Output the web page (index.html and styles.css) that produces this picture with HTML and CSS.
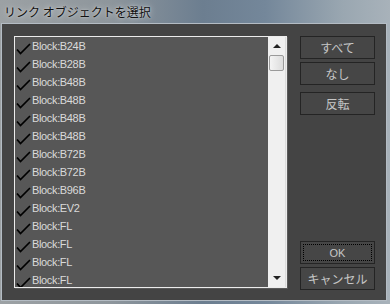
FILE: index.html
```html
<!DOCTYPE html>
<html lang="ja">
<head>
    <meta charset="UTF-8">
    <title>リンク オブジェクトを選択</title>
    <link rel="stylesheet" href="styles.css">
</head>
<body>
    <div class="window">
        <div class="title-bar">リンク オブジェクトを選択</div>
        <div class="dialog">
            <div class="listbox">
                <ul class="items">
                    <li><svg class="check" viewBox="0 0 15 12"><path d="M1 6.5 L4.5 10.5 L14 1"/></svg>Block:B24B</li>
                    <li><svg class="check" viewBox="0 0 15 12"><path d="M1 6.5 L4.5 10.5 L14 1"/></svg>Block:B28B</li>
                    <li><svg class="check" viewBox="0 0 15 12"><path d="M1 6.5 L4.5 10.5 L14 1"/></svg>Block:B48B</li>
                    <li><svg class="check" viewBox="0 0 15 12"><path d="M1 6.5 L4.5 10.5 L14 1"/></svg>Block:B48B</li>
                    <li><svg class="check" viewBox="0 0 15 12"><path d="M1 6.5 L4.5 10.5 L14 1"/></svg>Block:B48B</li>
                    <li><svg class="check" viewBox="0 0 15 12"><path d="M1 6.5 L4.5 10.5 L14 1"/></svg>Block:B48B</li>
                    <li><svg class="check" viewBox="0 0 15 12"><path d="M1 6.5 L4.5 10.5 L14 1"/></svg>Block:B72B</li>
                    <li><svg class="check" viewBox="0 0 15 12"><path d="M1 6.5 L4.5 10.5 L14 1"/></svg>Block:B72B</li>
                    <li><svg class="check" viewBox="0 0 15 12"><path d="M1 6.5 L4.5 10.5 L14 1"/></svg>Block:B96B</li>
                    <li><svg class="check" viewBox="0 0 15 12"><path d="M1 6.5 L4.5 10.5 L14 1"/></svg>Block:EV2</li>
                    <li><svg class="check" viewBox="0 0 15 12"><path d="M1 6.5 L4.5 10.5 L14 1"/></svg>Block:FL</li>
                    <li><svg class="check" viewBox="0 0 15 12"><path d="M1 6.5 L4.5 10.5 L14 1"/></svg>Block:FL</li>
                    <li><svg class="check" viewBox="0 0 15 12"><path d="M1 6.5 L4.5 10.5 L14 1"/></svg>Block:FL</li>
                    <li><svg class="check" viewBox="0 0 15 12"><path d="M1 6.5 L4.5 10.5 L14 1"/></svg>Block:FL</li>
                </ul>
                <div class="scrollbar">
                    <span class="arrow up"></span>
                    <span class="thumb"></span>
                    <span class="track"></span>
                    <span class="arrow down"></span>
                </div>
            </div>
            <div class="buttons">
                <button class="btn">すべて</button>
                <button class="btn">なし</button>
                <button class="btn gap">反転</button>
                <div class="spacer"></div>
                <button class="btn focused latin">OK</button>
                <button class="btn">キャンセル</button>
            </div>
        </div>
    </div>
</body>
</html>
```

FILE: styles.css
```css
:root {
    --dialog-bg: #444444;
    --list-bg: #575757;
    --frame: #b4bcc4;
    --button-text: #c6c6c6;
    --item-text: #dadada;
}

* {
    margin: 0;
    padding: 0;
    box-sizing: border-box;
}

body {
    width: 390px;
    height: 304px;
    overflow: hidden;
    font-family: 'Liberation Sans', sans-serif;
    background: linear-gradient(90deg, #9ca1a4 0%, #8e969c 28%, #6c7e90 52%, #74879a 68%, #9aa7b1 88%, #a8b2ba 100%);
}

.window {
    display: flex;
    flex-direction: column;
    height: 100%;
}

.title-bar {
    height: 23px;
    padding: 4px 0 0 4px;
    font-family: 'Noto Sans CJK JP', sans-serif;
    font-size: 12px;
    line-height: 15px;
    color: #111111;
    text-shadow: 0 0 6px rgba(255, 255, 255, 0.7), 0 0 2px rgba(255, 255, 255, 0.5);
}

.dialog {
    display: flex;
    width: 386px;
    height: 278px;
    margin-left: 1px;
    padding: 12px 10px 0 12px;
    background-color: var(--dialog-bg);
    border: 1px solid var(--frame);
}

.listbox {
    display: flex;
    width: 273px;
    height: 252px;
    border: 1px solid #ececec;
    background-color: var(--list-bg);
    box-shadow: 1px 1px 0 #5a5a5a;
}

.items {
    flex: 1;
    list-style: none;
    overflow: hidden;
    padding-left: 1px;
}

.items li {
    display: flex;
    align-items: center;
    height: 18px;
    font-size: 11px;
    letter-spacing: -0.35px;
    color: var(--item-text);
    white-space: nowrap;
}

.check {
    width: 15px;
    height: 12px;
    margin: 5px 1px 0 0;
    flex-shrink: 0;
}

.check path {
    fill: none;
    stroke: #000000;
    stroke-width: 1.7;
}

.scrollbar {
    display: flex;
    flex-direction: column;
    align-items: center;
    width: 18px;
    background-color: #f0f0f0;
    border-right: 1px solid #dcdcdc;
}

.arrow {
    width: 0;
    height: 0;
    border-left: 4px solid transparent;
    border-right: 4px solid transparent;
}

.arrow.up {
    margin-top: 7px;
    border-bottom: 4px solid #222222;
}

.arrow.down {
    margin-bottom: 7px;
    border-top: 4px solid #222222;
}

.thumb {
    width: 15px;
    height: 16px;
    margin-top: 7px;
    border: 1px solid #9a9a9a;
    border-radius: 2px;
    background: linear-gradient(90deg, #f4f4f4, #dcdcdc);
}

.track {
    flex: 1;
}

.buttons {
    display: flex;
    flex-direction: column;
    width: 75px;
    height: 254px;
    margin-left: 13px;
    gap: 3px;
}

.btn {
    height: 23px;
    background-color: #464646;
    border: 1px solid #242424;
    color: var(--button-text);
    font-family: 'Noto Sans CJK JP', sans-serif;
    font-size: 12px;
    line-height: 20px;
}

.btn.gap {
    margin-top: 4px;
}

.btn.latin {
    font-family: 'Liberation Sans', sans-serif;
    font-size: 11px;
}

.btn.focused {
    outline: 1px dotted #000000;
    outline-offset: -4px;
}

.spacer {
    flex: 1;
}
```
